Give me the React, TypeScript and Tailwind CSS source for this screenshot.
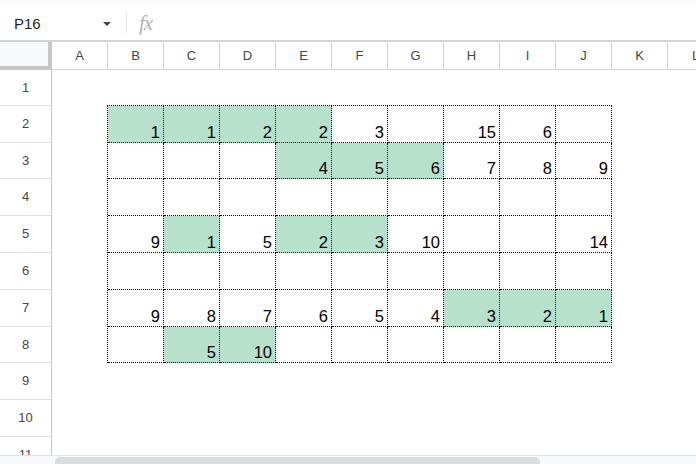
import React from "react";

const COLS = ["A", "B", "C", "D", "E", "F", "G", "H", "I", "J", "K", "L"];

const ROW_HEADER_HEIGHTS = [
  "h-[36px]",
  "h-[37px]",
  "h-[36px]",
  "h-[37px]",
  "h-[37px]",
  "h-[37px]",
  "h-[37px]",
  "h-[36px]",
  "h-[37px]",
  "h-[37px]",
  "h-[37px]",
];

const BLOCK_ROW_HEIGHTS = ["h-[37px]", "h-[36px]", "h-[37px]", "h-[37px]", "h-[37px]", "h-[37px]", "h-[36px]"];

const DATA: string[][] = [
  ["g1", "g1", "g2", "g2", "3", "", "15", "6", ""],
  ["", "", "", "g4", "g5", "g6", "7", "8", "9"],
  ["", "", "", "", "", "", "", "", ""],
  ["9", "g1", "5", "g2", "g3", "10", "", "", "14"],
  ["", "", "", "", "", "", "", "", ""],
  ["9", "8", "7", "6", "5", "4", "g3", "g2", "g1"],
  ["", "g5", "g10", "", "", "", "", "", ""],
];

export default function App() {
  return (
    <div className="w-[696px] h-[464px] overflow-hidden bg-white flex flex-col font-['Liberation_Sans',Arial,sans-serif] text-black">
      {/* top band */}
      <div className="h-[6px] shrink-0 bg-[#f9fbfd]" />

      {/* formula bar */}
      <div className="h-[34px] shrink-0 flex items-center bg-white">
        <div className="w-[88px] pl-[14px] text-[15px] text-[#1f1f1f] leading-none">P16</div>
        <svg width="8" height="4" viewBox="0 0 8 4" className="ml-[15px] mt-[1px]">
          <path d="M0 0 L8 0 L4 4 Z" fill="#444746" />
        </svg>
        <div className="ml-[15px] w-px h-[20px] bg-[#e0e0e0]" />
        <div className="ml-[12px] text-[21px] leading-none italic text-[#b4b4b4] font-['Liberation_Serif',serif] tracking-[-1px]">
          fx
        </div>
      </div>

      {/* column header */}
      <div className="h-[30px] shrink-0 flex border-t-2 border-[#d3d5d4]">
        <div className="w-[52px] shrink-0 h-full bg-[#f8f9fa] border-r-4 border-b-4 border-[#c4c7c5]" />
        {COLS.map((c) => (
          <div
            key={c}
            className="w-[56px] shrink-0 h-full border-r border-b border-[#d3d5d4] flex items-center justify-center text-[13px] text-[#444746]"
          >
            {c}
          </div>
        ))}
      </div>

      {/* body */}
      <div className="flex-1 min-h-0 flex overflow-hidden">
        <div className="w-[52px] shrink-0 flex flex-col border-r border-[#c4c7c5]">
          {ROW_HEADER_HEIGHTS.map((h, i) => (
            <div
              key={i}
              className={`${h} shrink-0 border-b border-[#e1e3e1] flex items-center justify-center text-[13px] text-[#444746]`}
            >
              {i + 1}
            </div>
          ))}
        </div>

        <div className="flex-1 pt-[35px] pl-[55px]">
          <div className="inline-grid grid-cols-[repeat(9,56px)] border-l border-t border-dotted border-black">
            {DATA.map((row, r) =>
              row.map((v, c) => {
                const green = v.startsWith("g");
                const text = green ? v.slice(1) : v;
                return (
                  <div
                    key={`${r}-${c}`}
                    className={`${BLOCK_ROW_HEIGHTS[r]} border-r border-b border-dotted border-black flex items-end justify-end pr-[3px] pb-[2px] text-[16.5px] leading-none ${
                      green ? "bg-[#b7e1cd]" : "bg-white"
                    }`}
                  >
                    {text}
                  </div>
                );
              })
            )}
          </div>
        </div>
      </div>

      {/* horizontal scrollbar */}
      <div className="h-[9px] shrink-0 flex border-t border-[#e1e3e1] bg-[#f8f9fa]">
        <div className="w-[55px] shrink-0" />
        <div className="w-[485px] mt-[1px] bg-[#dadce0] rounded-t-[5px]" />
      </div>
    </div>
  );
}
